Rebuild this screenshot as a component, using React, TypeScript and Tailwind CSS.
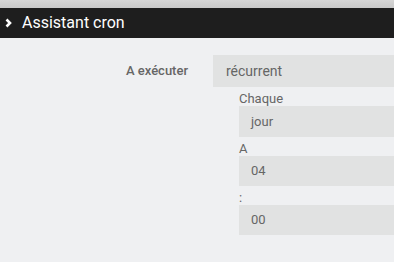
import React from "react";

export default function App() {
  return (
    <div className="w-[394px] h-[262px] overflow-hidden bg-[#eff0f2]" style={{ fontFamily: "Roboto, 'Liberation Sans', sans-serif" }}>
      <div className="h-[8px] bg-gradient-to-b from-[#d6d6d6] to-[#c9c9c9]" />
      <div className="h-[30px] bg-[#1e1e1e] flex items-center pl-[5px]">
        <svg width="7" height="10" viewBox="0 0 7 10" className="mr-[10px]">
          <path d="M1.5 1.5 L5 5 L1.5 8.5" stroke="#fff" strokeWidth="2.6" fill="none" />
        </svg>
        <span className="text-white text-[16px] leading-none">Assistant cron</span>
      </div>
      <div className="flex mt-[17px]">
        <div className="w-[213px] pr-[25px] text-right text-[13px] font-medium text-[#666] pt-[6px]">A exécuter</div>
        <div className="flex-1">
          <div className="h-[32px] bg-[#e1e2e2] flex items-center pl-[13px] text-[14px] text-[#666]">récurrent</div>
          <div className="ml-[26px]">
            <div className="h-[19px] flex items-end text-[13px] text-[#666] leading-none pb-[1px]">Chaque</div>
            <div className="h-[31px] bg-[#e1e2e2] flex items-center pl-[12px] text-[13px] text-[#666]">jour</div>
            <div className="h-[19px] flex items-end text-[13px] text-[#666] leading-none pb-[1px]">A</div>
            <div className="h-[30px] bg-[#e1e2e2] flex items-center pl-[12px] text-[13px] text-[#666]">04</div>
            <div className="h-[19px] flex items-end text-[13px] text-[#666] leading-none pb-[1px]">:</div>
            <div className="h-[30px] bg-[#e1e2e2] flex items-center pl-[12px] text-[13px] text-[#666]">00</div>
          </div>
        </div>
      </div>
    </div>
  );
}
